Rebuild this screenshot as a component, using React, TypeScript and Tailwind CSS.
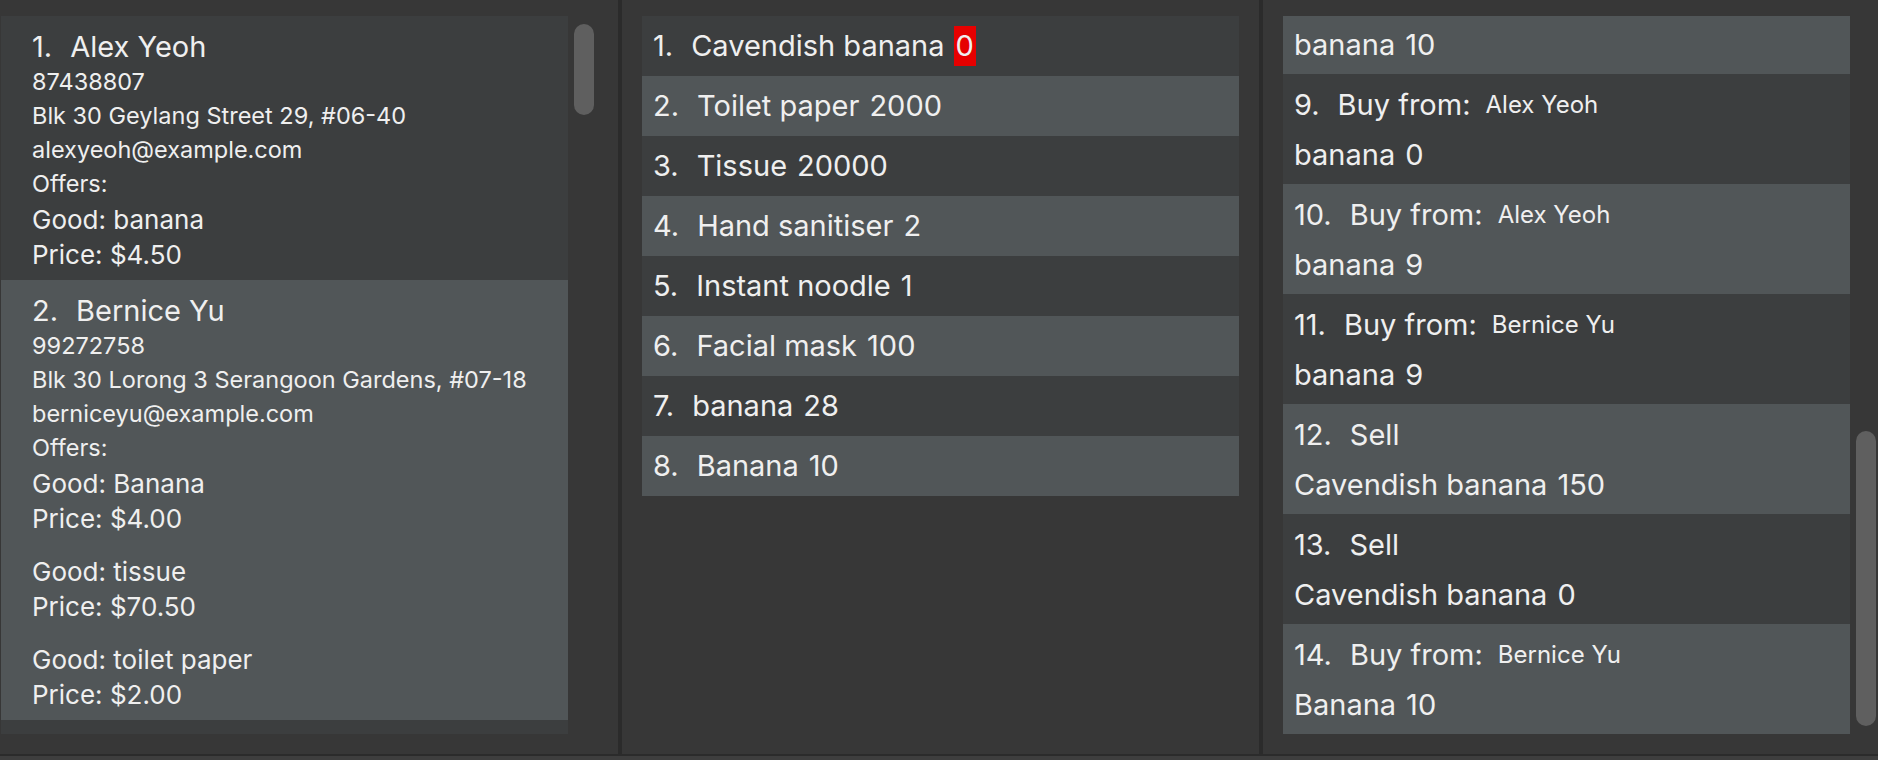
const font = "font-['Inter','Noto_Sans',sans-serif]"

type Offer = { good: string; price: string }
type Person = { name: string; phone: string; address: string; email: string; offers: Offer[] }

const persons: Person[] = [
  {
    name: "Alex Yeoh",
    phone: "87438807",
    address: "Blk 30 Geylang Street 29, #06-40",
    email: "alexyeoh@example.com",
    offers: [{ good: "banana", price: "$4.50" }],
  },
  {
    name: "Bernice Yu",
    phone: "99272758",
    address: "Blk 30 Lorong 3 Serangoon Gardens, #07-18",
    email: "berniceyu@example.com",
    offers: [
      { good: "Banana", price: "$4.00" },
      { good: "tissue", price: "$70.50" },
      { good: "toilet paper", price: "$2.00" },
    ],
  },
]

const goods = [
  { name: "Cavendish banana", qty: "0", low: true },
  { name: "Toilet paper", qty: "2000" },
  { name: "Tissue", qty: "20000" },
  { name: "Hand sanitiser", qty: "2" },
  { name: "Instant noodle", qty: "1" },
  { name: "Facial mask", qty: "100" },
  { name: "banana", qty: "28" },
  { name: "Banana", qty: "10" },
]

// kind "buy" shows the seller name after "Buy from:"
const orders = [
  { id: 9, kind: "buy", who: "Alex Yeoh", good: "banana", qty: "0" },
  { id: 10, kind: "buy", who: "Alex Yeoh", good: "banana", qty: "9" },
  { id: 11, kind: "buy", who: "Bernice Yu", good: "banana", qty: "9" },
  { id: 12, kind: "sell", who: "", good: "Cavendish banana", qty: "150" },
  { id: 13, kind: "sell", who: "", good: "Cavendish banana", qty: "0" },
  { id: 14, kind: "buy", who: "Bernice Yu", good: "Banana", qty: "10" },
]

function rowBg(index: number) {
  // 1-based: odd rows dark, even rows light
  return index % 2 === 1 ? "bg-[#3c3e3f]" : "bg-[#515658]"
}

function PersonCard({ person, index }: { person: Person; index: number }) {
  return (
    <div className={`${rowBg(index)} pl-[31px] pt-[12px] pb-[8px]`}>
      <div className="flex h-[37px] items-center text-[29px]">
        <span>{index}.</span>
        <span className="ml-[18px]">{person.name}</span>
      </div>
      <div className="text-[23.5px] leading-[34px]">
        <p>{person.phone}</p>
        <p>{person.address}</p>
        <p>{person.email}</p>
        <p>Offers:</p>
      </div>
      <div className="mt-[1px] flex flex-col gap-[18px] text-[26px] leading-[35px]">
        {person.offers.map((o) => (
          <div key={o.good}>
            <p>Good: {o.good}</p>
            <p>Price: {o.price}</p>
          </div>
        ))}
      </div>
    </div>
  )
}

export default function App() {
  return (
    <div className={`flex h-[760px] w-[1878px] flex-col overflow-hidden bg-[#373737] text-[#efefef] ${font}`}>
      <div className="flex h-[754px]">
        {/* Person list */}
        <div className="flex w-[618px] pl-[1px] pt-[16px]">
          <div className="h-[718px] w-[567px] overflow-hidden bg-[#3c3e3f]">
            {persons.map((p, i) => (
              <PersonCard key={p.name} person={p} index={i + 1} />
            ))}
          </div>
          <div className="ml-[6px] w-[20px] pt-[8px]">
            <div className="h-[91px] rounded-full bg-[#5f5f5f]" />
          </div>
        </div>

        <div className="w-[4px] bg-[#2b2b2b]" />

        {/* Goods list */}
        <div className="w-[637px] px-[20px] pt-[16px]">
          {goods.map((g, i) => (
            <div key={g.name} className={`${rowBg(i + 1)} flex h-[60px] items-center pl-[11px] text-[29px]`}>
              <span>{i + 1}.</span>
              <span className="ml-[18px]">{g.name}</span>
              {g.low ? (
                <span className="ml-[9px] bg-[#e60000] px-[2px] leading-[40px]">{g.qty}</span>
              ) : (
                <span className="ml-[10px]">{g.qty}</span>
              )}
            </div>
          ))}
        </div>

        <div className="w-[4px] bg-[#2b2b2b]" />

        {/* Order list, scrolled so only the tail of order 8 shows */}
        <div className="flex w-[615px] pl-[20px] pt-[16px]">
          <div className="h-[718px] w-[567px] overflow-hidden bg-[#3c3e3f]">
            <div className="flex h-[58px] items-start bg-[#515658] pl-[11px] pt-[4px]">
              <div className="flex h-[50px] items-center text-[29px]">
                <span>banana</span>
                <span className="ml-[10px]">10</span>
              </div>
            </div>
            {orders.map((o) => (
              <div key={o.id} className={`${rowBg(o.id)} pl-[11px] pt-[6px] pb-[4px]`}>
                <div className="flex h-[50px] items-center">
                  <span className="text-[29px]">{o.id}.</span>
                  {o.kind === "buy" ? (
                    <>
                      <span className="ml-[18px] text-[29px]">Buy from:</span>
                      <span className="ml-[15px] text-[24px]">{o.who}</span>
                    </>
                  ) : (
                    <span className="ml-[18px] text-[29px]">Sell</span>
                  )}
                </div>
                <div className="flex h-[50px] items-center text-[29px]">
                  <span>{o.good}</span>
                  <span className="ml-[10px]">{o.qty}</span>
                </div>
              </div>
            ))}
          </div>
          <div className="ml-[6px] w-[20px] pt-[415px]">
            <div className="h-[295px] rounded-full bg-[#5f5f5f]" />
          </div>
        </div>
      </div>
      <div className="h-[2px] bg-[#2b2b2b]" />
      <div className="h-[4px] bg-[#3e3e3e]" />
    </div>
  )
}
